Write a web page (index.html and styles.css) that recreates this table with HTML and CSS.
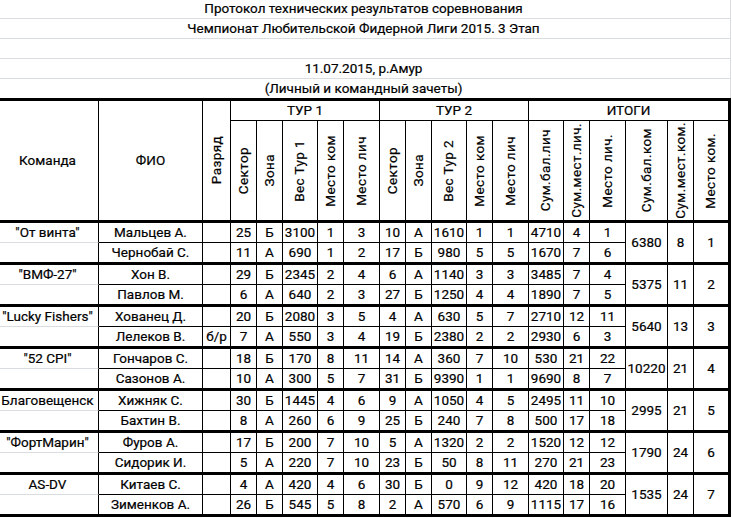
FILE: index.html
```html
<!DOCTYPE html>
<html lang="ru">
<head>
<meta charset="utf-8">
<title>Протокол</title>
<link rel="stylesheet" href="styles.css">
</head>
<body>
<div class="sheet">
  <div class="title">
    <div class="tr">Протокол технических результатов соревнования</div>
    <div class="tr">Чемпионат Любительской Фидерной Лиги 2015. 3 Этап</div>
    <div class="tr"></div>
    <div class="tr">11.07.2015, р.Амур</div>
    <div class="tr tl">(Личный и командный зачеты)</div>
  </div>
  <div class="grid">
    <div class="c h2">Команда</div>
    <div class="c h2">ФИО</div>
    <div class="c h2"><span class="v">Разряд</span></div>
    <div class="c s5">ТУР 1</div>
    <div class="c s5">ТУР 2</div>
    <div class="c s6 e">ИТОГИ</div>
    <div class="c hb"><span class="v">Сектор</span></div>
    <div class="c hb"><span class="v">Зона</span></div>
    <div class="c hb"><span class="v">Вес Тур 1</span></div>
    <div class="c hb"><span class="v">Место ком</span></div>
    <div class="c hb"><span class="v">Место лич</span></div>
    <div class="c hb"><span class="v">Сектор</span></div>
    <div class="c hb"><span class="v">Зона</span></div>
    <div class="c hb"><span class="v">Вес Тур 2</span></div>
    <div class="c hb"><span class="v">Место ком</span></div>
    <div class="c hb"><span class="v">Место лич</span></div>
    <div class="c hb"><span class="v">Сум.бал.лич</span></div>
    <div class="c hb"><span class="v">Сум.мест.лич.</span></div>
    <div class="c hb"><span class="v">Место лич.</span></div>
    <div class="c hb"><span class="v">Сум.бал.ком</span></div>
    <div class="c hb"><span class="v">Сум.мест.ком.</span></div>
    <div class="c hb e"><span class="v">Место ком.</span></div>

    <!-- group 1 -->
    <div class="c t">"От винта"</div><div class="c">Мальцев А.</div><div class="c"></div>
    <div class="c">25</div><div class="c">Б</div><div class="c">3100</div><div class="c">1</div><div class="c">3</div>
    <div class="c">10</div><div class="c">А</div><div class="c">1610</div><div class="c">1</div><div class="c">1</div>
    <div class="c">4710</div><div class="c">4</div><div class="c">1</div>
    <div class="c m">6380</div><div class="c m">8</div><div class="c m e">1</div>
    <div class="c b"></div><div class="c b">Чернобай С.</div><div class="c b"></div>
    <div class="c b">11</div><div class="c b">А</div><div class="c b">690</div><div class="c b">1</div><div class="c b">2</div>
    <div class="c b">17</div><div class="c b">Б</div><div class="c b">980</div><div class="c b">5</div><div class="c b">5</div>
    <div class="c b">1670</div><div class="c b">7</div><div class="c b">6</div>

    <!-- group 2 -->
    <div class="c t">"ВМФ-27"</div><div class="c">Хон В.</div><div class="c"></div>
    <div class="c">29</div><div class="c">Б</div><div class="c">2345</div><div class="c">2</div><div class="c">4</div>
    <div class="c">6</div><div class="c">А</div><div class="c">1140</div><div class="c">3</div><div class="c">3</div>
    <div class="c">3485</div><div class="c">7</div><div class="c">4</div>
    <div class="c m">5375</div><div class="c m">11</div><div class="c m e">2</div>
    <div class="c b"></div><div class="c b">Павлов М.</div><div class="c b"></div>
    <div class="c b">6</div><div class="c b">А</div><div class="c b">640</div><div class="c b">2</div><div class="c b">3</div>
    <div class="c b">27</div><div class="c b">Б</div><div class="c b">1250</div><div class="c b">4</div><div class="c b">4</div>
    <div class="c b">1890</div><div class="c b">7</div><div class="c b">5</div>

    <!-- group 3 -->
    <div class="c t">"Lucky Fishers"</div><div class="c">Хованец Д.</div><div class="c"></div>
    <div class="c">20</div><div class="c">Б</div><div class="c">2080</div><div class="c">3</div><div class="c">5</div>
    <div class="c">4</div><div class="c">А</div><div class="c">630</div><div class="c">5</div><div class="c">7</div>
    <div class="c">2710</div><div class="c">12</div><div class="c">11</div>
    <div class="c m">5640</div><div class="c m">13</div><div class="c m e">3</div>
    <div class="c b"></div><div class="c b">Лелеков В.</div><div class="c b">б/р</div>
    <div class="c b">7</div><div class="c b">А</div><div class="c b">550</div><div class="c b">3</div><div class="c b">4</div>
    <div class="c b">19</div><div class="c b">Б</div><div class="c b">2380</div><div class="c b">2</div><div class="c b">2</div>
    <div class="c b">2930</div><div class="c b">6</div><div class="c b">3</div>

    <!-- group 4 -->
    <div class="c t">"52 CPI"</div><div class="c">Гончаров С.</div><div class="c"></div>
    <div class="c">18</div><div class="c">Б</div><div class="c">170</div><div class="c">8</div><div class="c">11</div>
    <div class="c">14</div><div class="c">А</div><div class="c">360</div><div class="c">7</div><div class="c">10</div>
    <div class="c">530</div><div class="c">21</div><div class="c">22</div>
    <div class="c m">10220</div><div class="c m">21</div><div class="c m e">4</div>
    <div class="c b"></div><div class="c b">Сазонов А.</div><div class="c b"></div>
    <div class="c b">10</div><div class="c b">А</div><div class="c b">300</div><div class="c b">5</div><div class="c b">7</div>
    <div class="c b">31</div><div class="c b">Б</div><div class="c b">9390</div><div class="c b">1</div><div class="c b">1</div>
    <div class="c b">9690</div><div class="c b">8</div><div class="c b">7</div>

    <!-- group 5 -->
    <div class="c t">Благовещенск</div><div class="c">Хижняк С.</div><div class="c"></div>
    <div class="c">30</div><div class="c">Б</div><div class="c">1445</div><div class="c">4</div><div class="c">6</div>
    <div class="c">9</div><div class="c">А</div><div class="c">1050</div><div class="c">4</div><div class="c">5</div>
    <div class="c">2495</div><div class="c">11</div><div class="c">10</div>
    <div class="c m">2995</div><div class="c m">21</div><div class="c m e">5</div>
    <div class="c b"></div><div class="c b">Бахтин В.</div><div class="c b"></div>
    <div class="c b">8</div><div class="c b">А</div><div class="c b">260</div><div class="c b">6</div><div class="c b">9</div>
    <div class="c b">25</div><div class="c b">Б</div><div class="c b">240</div><div class="c b">7</div><div class="c b">8</div>
    <div class="c b">500</div><div class="c b">17</div><div class="c b">18</div>

    <!-- group 6 -->
    <div class="c t">"ФортМарин"</div><div class="c">Фуров А.</div><div class="c"></div>
    <div class="c">17</div><div class="c">Б</div><div class="c">200</div><div class="c">7</div><div class="c">10</div>
    <div class="c">5</div><div class="c">А</div><div class="c">1320</div><div class="c">2</div><div class="c">2</div>
    <div class="c">1520</div><div class="c">12</div><div class="c">12</div>
    <div class="c m">1790</div><div class="c m">24</div><div class="c m e">6</div>
    <div class="c b"></div><div class="c b">Сидорик И.</div><div class="c b"></div>
    <div class="c b">5</div><div class="c b">А</div><div class="c b">220</div><div class="c b">7</div><div class="c b">10</div>
    <div class="c b">23</div><div class="c b">Б</div><div class="c b">50</div><div class="c b">8</div><div class="c b">11</div>
    <div class="c b">270</div><div class="c b">21</div><div class="c b">23</div>

    <!-- group 7 -->
    <div class="c t">AS-DV</div><div class="c">Китаев С.</div><div class="c"></div>
    <div class="c">4</div><div class="c">А</div><div class="c">420</div><div class="c">4</div><div class="c">6</div>
    <div class="c">30</div><div class="c">Б</div><div class="c">0</div><div class="c">9</div><div class="c">12</div>
    <div class="c">420</div><div class="c">18</div><div class="c">20</div>
    <div class="c m">1535</div><div class="c m">24</div><div class="c m e">7</div>
    <div class="c b"></div><div class="c b">Зименков А.</div><div class="c b"></div>
    <div class="c b">26</div><div class="c b">Б</div><div class="c b">545</div><div class="c b">5</div><div class="c b">8</div>
    <div class="c b">2</div><div class="c b">А</div><div class="c b">570</div><div class="c b">6</div><div class="c b">9</div>
    <div class="c b">1115</div><div class="c b">17</div><div class="c b">16</div>
  </div>
</div>
</body>
</html>
```

FILE: styles.css
```css
* {
  box-sizing: border-box;
  margin: 0;
  padding: 0;
}

html, body {
  background: #fff;
}

body {
  width: 732px;
  height: 518px;
  overflow: hidden;
  font-family: Roboto, "Liberation Sans", sans-serif;
  font-size: 13.5px;
  line-height: 1;
  color: #000;
  -webkit-text-stroke: 0.2px #000;
}

.sheet {
  width: 734px;
  margin: -1px 0 0 -3px;
}

.title {
  display: flex;
  flex-direction: column;
}

.tr {
  height: 20px;
  display: flex;
  align-items: center;
  justify-content: center;
  border-bottom: 1px solid #d9dce0;
  border-right: 1px solid #d9dce0;
  white-space: nowrap;
}

.tr.tl {
  height: 19px;
  border-bottom: 0;
}

.grid {
  display: grid;
  grid-template-columns: 102px 104px 28px 26px 26px 35px 26px 36px 26px 26px 35px 26px 36px 35px 26px 36px 42px 26px 34px;
  grid-template-rows: 20px 102px repeat(7, 20px 22px);
  border-top: 3px solid #000;
  border-right: 3px solid #000;
}

.c {
  display: flex;
  align-items: center;
  justify-content: center;
  border-right: 1px solid #000;
  border-bottom: 1px solid #000;
  white-space: nowrap;
  min-width: 0;
}

.c.e {
  border-right: 0;
}

.c.h2 {
  grid-row: span 2;
  border-bottom-width: 3px;
}

.c.s5 {
  grid-column: span 5;
}

.c.s6 {
  grid-column: span 6;
}

.c.hb {
  border-bottom-width: 3px;
}

.c.t {
  border-bottom-color: #d9dce0;
}

.c.b {
  border-bottom-width: 3px;
}

.c.m {
  grid-row: span 2;
  border-bottom-width: 3px;
}

.v {
  writing-mode: vertical-rl;
  transform: rotate(180deg);
  white-space: nowrap;
  letter-spacing: 0.4px;
}
```
